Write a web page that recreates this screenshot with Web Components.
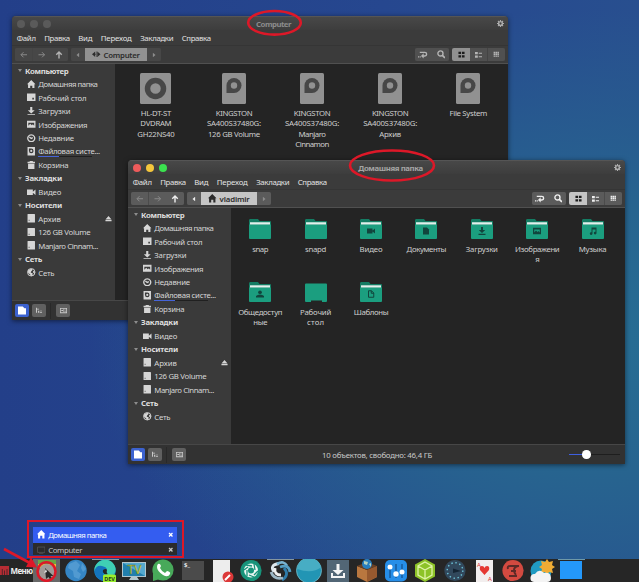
<!DOCTYPE html>
<html lang="ru"><head><meta charset="utf-8"><title>Desktop</title>
<style>html,body{margin:0;width:639px;height:582px;overflow:hidden}</style></head>
<body><desktop-screen></desktop-screen>
<script>
// Small line icons, drawn on a 16x16 grid with currentColor.
const ICONS = {
 home:'<path d="M8 0 0 8h2v8h4v-5h4v5h4V8h2z"/>',
 desk:'<path fill-rule="evenodd" d="M0 1h16v14H0zM10 9v3h3V9z"/>',
 down:'<path d="M6 0h4v6h4.500L8 12 1.500 6H6zM1 13.500h14V16H1z"/>',
 image:'<path fill-rule="evenodd" d="M0 1.500h16v13H0zM2.500 11l3.500-4 3 3 2-2 2.500 3V5h-11z"/>',
 clock:'<path d="M8 1.500a6.500 6.500 0 1 0 .01 0M4.500 5.500 8 8.500l3-1.500" fill="none" stroke="currentColor" stroke-width="2.500"/>',
 disk:'<path d="M1 0h14v16H1z"/><path d="M8 3a4.300 4.300 0 1 1-4.300 4.300V3z" fill="#383838"/><circle cx="8" cy="7.300" r="2"/>',
 trash:'<path d="M1 1.500h4V0h6v1.500h4V4H1zM2 5h12v11H2z"/>',
 video:'<path d="M0 3h11v10H0zM11 7l5-4v10l-5-4z"/>',
 drive:'<path d="M2 0h12a1 1 0 0 1 1 1v15H1V1a1 1 0 0 1 1-1"/><path d="M3 11h2v2H3z" fill="#777"/>',
 globe:'<circle cx="8" cy="8" r="7" fill="none" stroke="currentColor" stroke-width="1.800"/><path d="M2 4q5-3 8-2 1 3-2 4l-1 3q3 0 4 2l-2 4q-3 0-3-3L2 9zM12 5l3 2-1 4-3-3z"/>',
 eject:'<path d="M8 2 1 10h14zM1 11.500h14v3H1z"/>',
 left:'<path d="M15 8H2M7.500 2.500 2 8l5.500 5.500" fill="none" stroke="currentColor" stroke-width="2"/>',
 right:'<path d="M1 8h13M8.500 2.500 14 8l-5.500 5.500" fill="none" stroke="currentColor" stroke-width="2"/>',
 up:'<path d="M8 15V2M2.500 7.500 8 2l5.500 5.500" fill="none" stroke="currentColor" stroke-width="2.800"/>',
 tl:'<path d="M11 2v12L4 8z"/>', tr:'<path d="M5 2v12l7-6z"/>',
 comp:'<path d="M6 3v10L0 8zM10 3v10l6-5zM5 7h2v2H5zM8.500 3h2v10h-2z"/>',
 route:'<path d="M3 4h8.500a2.800 2.800 0 0 1 0 6H8" fill="none" stroke="currentColor" stroke-width="2.400"/><path d="M9.500 5.500v9L5 10zM0 10.500h2.200v2.300H0zM3.200 10.500h1.500v2.300H3.200z"/>',
 search:'<circle cx="6.500" cy="6.500" r="4.800" fill="none" stroke="currentColor" stroke-width="2.600"/><path d="m10 10 5 5" stroke="currentColor" stroke-width="3.200"/>',
 grid:'<path d="M1 1.500h6v5.500H1zM9 1.500h6v5.500H9zM1 9.500h6V15H1zM9 9.500h6V15H9z"/>',
 list:'<path d="M0 2h6v5H0zM8 3.500h8V6H8zM0 9.500h6v5H0zM8 11h8v2.500H8z"/>',
 dense:'<path d="M1.500 2h3.800v3.500H1.500zM6.200 2H10v3.500H6.200zM10.900 2h3.700v3.500h-3.700zM1.500 6.400h3.800v3.500H1.500zM6.200 6.400H10v3.500H6.200zM10.900 6.400h3.700v3.500h-3.700zM1.500 10.800h3.800v3.500H1.500zM6.200 10.800H10v3.500H6.200zM10.900 10.800h3.700v3.500h-3.700z"/>',
 gear:'<circle cx="8" cy="8" r="4.300" fill="none" stroke="currentColor" stroke-width="3.400"/><path d="M8 0v3M8 13v3M0 8h3M13 8h3M2.300 2.300l2 2M11.700 11.700l2 2M13.700 2.300l-2 2M2.300 13.700l2-2" stroke="currentColor" stroke-width="2.600"/>',
 folder:'<path d="M0 1h9l3 3h4v12H0z"/>',
 tree:'<path d="M0 2h2.500v12H0M2.500 4h5v2h-5M5 9h3v5H5zM9.500 9H15v1.700H9.500zM9.500 12.300H15V14H9.500z"/>',
 panel:'<path fill-rule="evenodd" d="M0 2h16v12H0zM1.800 4v8h12.400V4z"/><path d="M8 4h1.500v8H8zM3 7h4v2H3zM10.500 6h3v1.300h-3zM10.500 9h3v1.300h-3z"/>',
 doc:'<path d="M2 1h8l4 4v10H2z"/>',
 user:'<circle cx="8" cy="4.500" r="3.700"/><path d="M0 15v-3q3-3 8-3t8 3v3z"/>',
 music:'<path d="M5 1h10v11a2.700 2.700 0 1 1-2-2.500V5H7v8a2.700 2.700 0 1 1-2-2.500z"/>',
 tmpl:'<path d="M3 1.500h6l4.500 4.500v8.500H3zM8.500 1.500V6.500h5" fill="none" stroke="currentColor" stroke-width="2"/>',
 x:'<path d="m3 3 10 10M13 3 3 13" stroke="currentColor" stroke-width="3.800"/>',
 monitor:'<path d="M1 2h14v10H1zM4 14.500h8" fill="none" stroke="currentColor" stroke-width="1.500"/>'
};
const def=(name,tpl,after)=>customElements.define(name,class extends HTMLElement{
  constructor(){super();this.attachShadow({mode:'open'})}
  connectedCallback(){this.shadowRoot.innerHTML=tpl(this);if(after)after(this)}
});

def('ui-icon',e=>{const s=e.getAttribute('s')||8.5;return `<style>:host{display:inline-flex;flex:none;width:${s}px;height:${s}px}svg{width:100%;height:100%}</style><svg viewBox="0 0 16 16" fill="currentColor">${ICONS[e.getAttribute('n')]}</svg>`});

// A one-line label; "w" spreads its letters over the given width.
def('ui-text',e=>`<style>:host{display:block;white-space:nowrap;flex:none}span{display:inline-block}</style><span>${e.getAttribute('t')}</span>`,e=>{
  const w=+e.getAttribute('w'),s=e.shadowRoot.querySelector('span');
  if(w)s.style.letterSpacing=((w-s.getBoundingClientRect().width)/e.getAttribute('t').length)+'px';
});

def('side-head',e=>`<style>:host{display:flex;align-items:center;height:13.46px;padding-left:6px;gap:3px;font-weight:700;color:#dedede}i{width:0;height:0;border:2.300px solid transparent;border-top:3px solid #8d8d8d;border-bottom:0}</style><i></i><ui-text t="${e.getAttribute('t')}" w="${e.getAttribute('w')}"></ui-text>`);
def('side-row',e=>`<style>:host{display:flex;align-items:center;height:13.46px;padding:0 3px 0 15px;gap:2.800px;color:#d6d6d6}
 .l{flex:1}.u{height:11px;line-height:11px;background:linear-gradient(#4664d8,#4664d8) 0 100%/21px 1px no-repeat,linear-gradient(#202020,#202020) 0 100%/54px 1px no-repeat}</style>
 <ui-icon n="${e.getAttribute('i')}"></ui-icon><ui-text class="l ${e.hasAttribute('usage')?'u':''}" t="${e.getAttribute('t')}" w="${e.getAttribute('w')}"></ui-text>${e.hasAttribute('eject')?'<ui-icon n="eject" s="7"></ui-icon>':''}`);

const SIDE=[['h','Компьютер',43.5],['home','Домашняя папка',59],['desk','Рабочий стол',48],['down','Загрузки',32],['image','Изображения',49],['clock','Недавние',35.5],['disk','Файловая систе...',61.5,'usage'],['trash','Корзина',30],['h','Закладки',37],['video','Видео',23],['h','Носители',37],['drive','Архив',22.5,'eject'],['drive','126 GB Volume',52],['drive','Manjaro Cinnam...',59.5],['h','Сеть',17],['globe','Сеть',16]];
def('side-bar',()=>`<style>:host{display:block;background:#3a3a3a;width:102.500px;box-sizing:border-box}</style>`+SIDE.map(r=>r[0]=='h'?`<side-head t="${r[1]}" w="${r[2]}"></side-head>`:`<side-row i="${r[0]}" t="${r[1]}" w="${r[2]}" ${r[3]||''}></side-row>`).join(''));

def('menu-bar',()=>`<style>:host{display:flex;height:15px;align-items:center;padding-left:4.700px;gap:8.500px;color:#e2e2e2}</style>`+[['Файл',19],['Правка',25.5],['Вид',14],['Переход',31],['Закладки',33],['Справка',29]].map(m=>`<ui-text t="${m[0]}" w="${m[1]}"></ui-text>`).join(''));

def('tool-bar',e=>{const a=e.hasAttribute('active');return `<style>:host{display:flex;box-sizing:border-box;height:19px;padding:0 3px;align-items:center;gap:3px;border-top:1px solid #353535;border-bottom:1px solid #505050;background:#3b3b3b;color:${a?'#efefef':'#b4b4b4'}}
 .g{display:flex;height:13px;border-radius:2px;overflow:hidden;gap:.5px;background:${a?'#4b4b4b':'#444'}}
 b{display:flex;font-weight:700;width:17.2px;align-items:center;justify-content:center;background:${a?'#5b5b5b':'#505050'};gap:3px}
 .g.p{gap:0}.p b{width:14.300px}.p b.m{width:${a?56:62}px;background:${a?'#c5c5c5':'#919191'};color:#2c2c2c;font-weight:600}.d,.p b.d{color:#8d8d8d}.s{flex:1}b.on{background:${a?'#c5c5c5':'#919191'};color:#1d1d1d}${a?'':'.q b,.p b{background:#474747}'}.z{display:flex;gap:3px}</style>
 <div class="g q"><b class="d"><ui-icon n="left" s="7.500"></ui-icon></b><b class="d"><ui-icon n="right" s="7.500"></ui-icon></b><b><ui-icon n="up" s="8"></ui-icon></b></div>
 <div class="g p"><b class="${a?'':'d'}"><ui-icon n="tl" s="6"></ui-icon></b><b class="m"><ui-icon n="${a?'home':'comp'}" s="8.500"></ui-icon><ui-text t="${a?'vladimir':'Computer'}" w="${a?30:36}"></ui-text></b><b class="d"><ui-icon n="tr" s="6"></ui-icon></b></div>
 <span class="s"></span><div class="z"><div class="g"><b><ui-icon n="route" s="9.500"></ui-icon></b><b><ui-icon n="search"></ui-icon></b></div>
 <div class="g"><b class="on"><ui-icon n="grid" s="7"></ui-icon></b><b><ui-icon n="list" s="7.500"></ui-icon></b><b><ui-icon n="dense" s="6.500"></ui-icon></b></div></div>`});

def('status-bar',e=>`<style>:host{display:flex;box-sizing:border-box;height:20px;border-top:1px solid #474747;background:#323232;align-items:center;padding:0 14px 0 3px;color:#c9c9c9}
 b{display:flex;width:14px;height:13.500px;border-radius:2px;background:#606060;align-items:center;justify-content:center;margin-right:3px;color:#c8c8c8}b.on{background:#3c62cf;color:#fff}i{width:1px;height:16px;background:#292929;margin:0 5px 0 1px}.m{flex:1;display:flex;justify-content:center;padding-right:4px}.sl{width:51px;height:8px;display:flex;align-items:center;margin-right:-9px}.sl u{height:1.500px;width:13px;background:#3e5fe0}.sl s{height:1px;flex:1;background:#1e1e1e}.sl em{width:8.500px;height:8.500px;border-radius:50%;background:#fff}</style>
 <b class="on"><ui-icon n="folder" s="8.500"></ui-icon></b><b><ui-icon n="tree" s="6.500"></ui-icon></b><i></i><b><ui-icon n="panel" s="7"></ui-icon></b>${e.hasAttribute('active')?'<div class="m"><ui-text t="10 объектов, свободно: 46,4 ГБ" w="110"></ui-text></div><div class="sl"><u></u><em></em><s></s></div>':''}`);

const lines=e=>e.getAttribute('t').split('|').map(l=>{const[t,w]=l.split('~');return `<ui-text t="${t}" w="${w}"></ui-text>`}).join('');
def('drive-item',e=>{const dvd=e.hasAttribute('dvd');return `<style>:host{display:flex;flex-direction:column;align-items:center;width:78.1px;padding-top:9px;color:#cecece;line-height:10.300px}svg{height:31px;margin-bottom:4px}</style>
 <svg width="${dvd?31:24}" viewBox="0 0 ${dvd?31:24} 31"><rect width="100%" height="31" rx="1.500" fill="#919191"/>${dvd?'<circle cx="15.500" cy="15.500" r="8" fill="none" stroke="#474747" stroke-width="5.500"/>':'<path d="M4.500 20v-7.500a7.500 7.500 0 1 1 7.500 7.500z" fill="#474747"/><circle cx="12" cy="12.500" r="3.200" fill="#919191"/>'}</svg>`+lines(e)});
def('folder-item',e=>{const i=e.getAttribute('i');return `<style>:host{display:flex;flex-direction:column;align-items:center;width:55.4px;height:63.4px;color:#cecece;line-height:10.300px}.f{display:grid;place-items:center;height:20px;width:22px;margin-bottom:5px}.f>*{grid-area:1/1}ui-icon{color:#11453d;margin-top:5px}</style>
 <div class="f"><svg width="22" height="20">${i=='desk'?'<path d="M0 2.500q0-1 1-1h20q1 0 1 1V19q0 1-1 1h-4v-1.500H6V20H1q-1 0-1-1z" fill="#1b9e7f"/>':'<path d="M0 4V1.500Q0 0 1 0h8l1.500 2H21q1 0 1 1v3H0z" fill="#147c63"/><path d="M0 5.500h22V19q0 1-1 1H1q-1 0-1-1z" fill="#1b9e7f"/><path d="M1 3.300h20v2.200H1z" fill="#e2f0ec"/>'}</svg>${i&&i!='desk'?`<ui-icon n="${i}" s="8"></ui-icon>`:''}</div>`+lines(e)});

def('file-window',e=>{const a=e.hasAttribute('active')?'active':'';return `<style>:host{display:flex;flex-direction:column;background:#3b3b3b;border-radius:4px 4px 0 0;overflow:hidden;box-shadow:0 1px 5px #0008}
 header{display:flex;height:14px;box-sizing:border-box;border-top:.5px solid #555;align-items:center;padding:0 4px 0 5px;gap:5px;background:linear-gradient(#484848,#3d3d3d);color:${a?'#a5a5a5':'#8b8b8b'};font-weight:700}
 i{width:8px;height:8px;border-radius:50%;background:#5a5a5a}${a?'i:nth-of-type(1){background:#ed5b5b}i:nth-of-type(2){background:#f4c63c}i:nth-of-type(3){background:#3be24f}':''}
 .t{flex:1;display:flex;justify-content:center;padding-right:${a?0:1}px}header ui-icon{color:#adadad}main{display:flex;flex:1;min-height:0}.c{flex:1;background:#242424;display:flex;flex-wrap:wrap;align-content:flex-start;padding:${a?'10.500px 0 0 2px':'0 0 0 2.300px'}}</style>
 <header><i></i><i></i><i></i><div class="t"><ui-text t="${e.getAttribute('t')}" w="${e.getAttribute('w')}"></ui-text></div><ui-icon n="gear" s="7"></ui-icon></header>
 <menu-bar></menu-bar><tool-bar ${a}></tool-bar><main><side-bar></side-bar><div class="c"><slot></slot></div></main><status-bar ${a}></status-bar>`});

// Launcher artwork on a 24x23 canvas.
const APPS=[
 '<path d="M-2-1h27v25H-2z" fill="#686868"/><path d="M3 3h18v6H3z" fill="#e9bd35"/><path d="M3 1h18v4H3z" fill="#6aa644"/><circle cx="12" cy="13" r="8" fill="#a19b98"/><path d="m10 9 1 11 2.500-2 2 3 2-1-2-3h3z" fill="#282828"/><path d="m9 14 2-4 1 3z" fill="#ddd"/>',
 '<circle cx="12" cy="11.500" r="10.700" fill="#3586c5"/><path d="m5 5 7-3 4 4-3 6 4 3-2 5-5-2-1-6-5-3zM18 4l4 6-3 3-2-4z" fill="#64a8d8" opacity=".6"/>',
 '<path d="M-1-1h27v1.800H-1z" fill="#a9b4bb"/><circle cx="12" cy="11.500" r="10.700" fill="#178bcf"/><path d="M1.500 9C5-2 20-2 22.500 9q1 7-6 7-4 0-3-3 1-5-4-5T1.500 12z" fill="#3fcfb4"/><path d="M1.500 12Q3 6 9 7q5 1 5 4-5-1-4 4 1 4 7 4-6 5-11 1-4-3-4.500-8z" fill="#1474bd"/><path d="M10 11q3-2 4 0-1 3 1 4-6 1-5-4" fill="#262626"/><rect x="10" y="15.500" width="13" height="8" rx="1.500" fill="#9bf02e"/><text x="16.500" y="21.700" font-size="5.500" text-anchor="middle" fill="#24401b" font-weight="700">DEV</text>',
 '<path d="M0 3h24v15h-9l2 3H7l2-3H0z" fill="#b1c5cd"/><path d="M1 4h22v13H1z" fill="#217fae"/><path d="m1 4 22 13V4z" fill="#54a9cf"/><text x="12.500" y="15" font-size="12" text-anchor="middle" fill="#f0e631" stroke="#395a35" stroke-width=".3">TV</text>',
 '<circle cx="12" cy="11" r="10.600" fill="#48a95a"/><path d="m2 22 0-8 7 6z" fill="#48a95a"/><path d="M7 5q2-1 3 2l-1 2q2 4 5 5l2-2q4 1 3 3-2 4-7 1Q6 12 6 8q0-2 1-3" fill="#fff"/>',
 '<path d="M1 2h22v19H1z" fill="#4b4b4b"/><text x="3" y="8" font-size="6" fill="#eee" font-weight="700">$_</text>',
 '<path d="M3 1h17v22H3z" fill="#ededed"/><circle cx="18" cy="18" r="5.500" fill="#dc3838"/><path d="m15 21 5-5" stroke="#fff" stroke-width="2"/>',
 '<circle cx="12" cy="11.500" r="10.600" fill="#17937a"/><circle cx="12" cy="11.500" r="5" fill="none" stroke="#eaf7f3" stroke-width="4"/><path d="m7 6 6 1M15 5l1 6M19 12l-4 4M15 18l-5-2M8 17l0-6M5 11l4-3" stroke="#17937a" stroke-width="1.300"/>',
 '<path d="M-1-1h27v1.800H-1z" fill="#9fb4bf"/><g fill="none" stroke-width="2.800"><path d="M6 13Q1 6 11 4.500" stroke="#dce6ec"/><path d="M9 5q7-4 10 2" stroke="#79b3d2"/><path d="M12 8q9-3 10 5" stroke="#559ec5"/><path d="M16 9q6 7-2 12" stroke="#2f7cab"/><path d="M3 13q3 8 12 6" stroke="#9db7c5"/><path d="M7 9q-1 7 6 7" stroke="#eee"/></g>',
 '<circle cx="12" cy="11.500" r="12.500" fill="#2295b4" stroke="#73bccb" stroke-width=".8"/><path d="M0 10Q2-1 13-.5q10 1 11 9Q15 15 0 10" fill="#47adc4"/>',
 '<path d="M1 1h22v22H1z" fill="#526675"/><path d="M10.500 5h3v6h4L12 16l-5.500-5h4zM5 14h2v3h10v-3h2v5H5z" fill="#f4f4f4"/>',
 '<path d="m2 7 10 4 10-4v11l-10 5-10-5z" fill="#b9773f"/><path d="m12 11 10-4v11l-10 5z" fill="#96592f"/><path d="m2 7 10-4 10 4-10 4z" fill="#6a4023"/><circle cx="12" cy="5" r="5" fill="#287ebf"/><path d="m9 2 4 1-1 3-3-1zM14 5l2-1v4z" fill="#b6d2be"/>',
 '<rect x="1" y="1" width="22" height="21.500" rx="5" fill="#268ee8"/><path d="M6 5v14M12 5v14M18 5v14" stroke="#175b9c" stroke-width="1.500"/><g fill="#fff"><circle cx="6" cy="8" r="2.500"/><circle cx="12" cy="15" r="2.700"/><circle cx="18" cy="13" r="2.500"/></g>',
 '<path d="m12 0 10 5.500v12L12 23 2 17.500v-12z" fill="#8dc328"/><path d="m12 3 7 4v9l-7 4-7-4V7zM5 7l7 4 7-4M12 11v9" fill="none" stroke="#dff3a6" stroke-width="1.300"/>',
 '<circle cx="12" cy="11.500" r="10.600" fill="#31485c"/><circle cx="12" cy="11.500" r="7.800" fill="none" stroke="#6fc6da" stroke-width="1.400" stroke-dasharray="1.400 2.700"/><path d="m10 9.500 8 2.500-8 2z" fill="#142433"/>',
 '<path d="M4 1h17v22H4z" fill="#f2eeee"/><path d="M12.500 16 8 11q-1-4 2-4 2 0 2.500 2 .5-2 2.500-2 3 0 2 4z" fill="#e53832"/><text x="5" y="7.500" font-size="6" fill="#d33">A</text><text x="16" y="22" font-size="6" fill="#d33">A</text>',
 '<circle cx="12" cy="11.500" r="10.600" fill="#d34a40"/><path d="M7 10q-1-3 2-3h9M17 7q-4 1-4 4t2 5M8 17h8M10 12h5" fill="none" stroke="#5c2a27" stroke-width="1.900"/>',
 '<circle cx="11" cy="12" r="10.500" fill="#209bc2"/><path d="m17 0 2 3 4-1-1 4 3 2-3 2 1 4-4-1-2 3-2-3-4 1 1-4-3-2 3-2-1-4 4 1z" fill="#efac35"/><path d="M4 23a4 4 0 0 1 1-8q4-6 9-1 7-1 7 5 0 4-4 4z" fill="#f4f4f4"/>',
 '<path d="M-1-1h27v1.800H-1z" fill="#83b8cb"/><path d="M1 2h22v18H1z" fill="#2498fa"/>'
];
def('task-bar',()=>`<style>:host{display:flex;height:23px;background:#262626;color:#eee;overflow:hidden}.m{display:flex;align-items:center;width:32.500px;gap:2px;font-size:8px;font-weight:700}.a{width:29.120px;display:flex;justify-content:center;flex:none}.a svg{overflow:visible}text{font-family:"Noto Sans",sans-serif}</style>
 <div class="m"><svg width="9" height="9"><path d="M0 0h9v9H0z" fill="#b72d34"/><path d="M2.300 9V3M4.500 9V4.500M7 3v6" fill="none" stroke="#3a2224" stroke-width=".8"/></svg><ui-text t="Меню" w="22"></ui-text></div>${APPS.map(p=>`<span class="a"><svg width="24" height="23">${p}</svg></span>`).join('')}`);

def('window-list',()=>`<style>:host{display:block;box-sizing:border-box;border:2.800px solid #dd1828;padding:4.500px 5.500px 0 3.700px}
 div{display:flex;align-items:center;height:16px;padding:0 3px 0 4px;gap:3px;color:#c9c9c9;background:#2b2b2b}div.on{background:#345df0;color:#fff}.k{height:12.500px;padding-top:2px;box-sizing:border-box}ui-text{flex:1}.d{color:#555}.k ui-text{line-height:10px;height:10px}</style>
 <div class="on"><ui-icon n="home"></ui-icon><ui-text t="Домашняя папка" w="58"></ui-text><ui-icon n="x" s="5.500"></ui-icon></div><div class="k"><ui-icon class="d" n="monitor"></ui-icon><ui-text t="Computer" w="34"></ui-text><ui-icon n="x" s="5.500"></ui-icon></div>`);

def('desktop-screen',()=>`<style>
 :host{display:block;position:relative;width:639px;height:582px;overflow:hidden;font:7.800px "Noto Sans","Open Sans",sans-serif;line-height:10px;
 background:radial-gradient(ellipse 500px 330px at 590px 340px,#276e94 0,#27648f 40%,#26528b00 100%),linear-gradient(90deg,#233f89,#26478f 60%,#284f8f)}
 file-window,window-list,task-bar,.ink{position:absolute}
 .w1{left:12px;top:16px;width:496px;height:304px}.w2{left:128px;top:160px;width:497px;height:304px}
 window-list{left:27px;top:520px;width:157px;height:38px}task-bar{left:0;top:559px;width:639px}.ink{left:0;top:0}</style>
 <file-window class="w1" t="Computer" w="35"><drive-item dvd t="HL-DT-ST~30|DVDRAM~31|GH22NS40~37"></drive-item><drive-item t="KINGSTON~36.5|SA400S37480G:~54|126 GB Volume~52"></drive-item><drive-item t="KINGSTON~36.5|SA400S37480G:~54|Manjaro~27|Cinnamon~33.5"></drive-item><drive-item t="KINGSTON~36.5|SA400S37480G:~54|Архив~22"></drive-item><drive-item t="File System~37.5"></drive-item></file-window>
 <file-window active class="w2" t="Домашняя папка" w="64.5">
 <folder-item t="snap~16"></folder-item><folder-item t="snapd~21"></folder-item><folder-item i="video" t="Видео~23"></folder-item><folder-item i="doc" t="Документы~39.5"></folder-item><folder-item i="down" t="Загрузки~32"></folder-item><folder-item i="image" t="Изображени~44.5|я~4"></folder-item><folder-item i="music" t="Музыка~27.5"></folder-item><folder-item i="user" t="Общедоступ~44|ные~14"></folder-item><folder-item i="desk" t="Рабочий~31|стол~17"></folder-item><folder-item i="tmpl" t="Шаблоны~34.5"></folder-item></file-window>
 <window-list></window-list><task-bar></task-bar>
 <svg class="ink" width="639" height="582" fill="none" stroke="#dd1828" stroke-width="2.600"><ellipse cx="274.500" cy="22.800" rx="26.300" ry="11.800"/><ellipse cx="392" cy="165.500" rx="42" ry="15"/><ellipse cx="46.500" cy="571.500" rx="9" ry="9.300"/><path d="m4 549 26 14"/><path d="m26 567 5-10L37 567.500z" fill="#dd1828" stroke="none"/></svg>`);
</script></body></html>
